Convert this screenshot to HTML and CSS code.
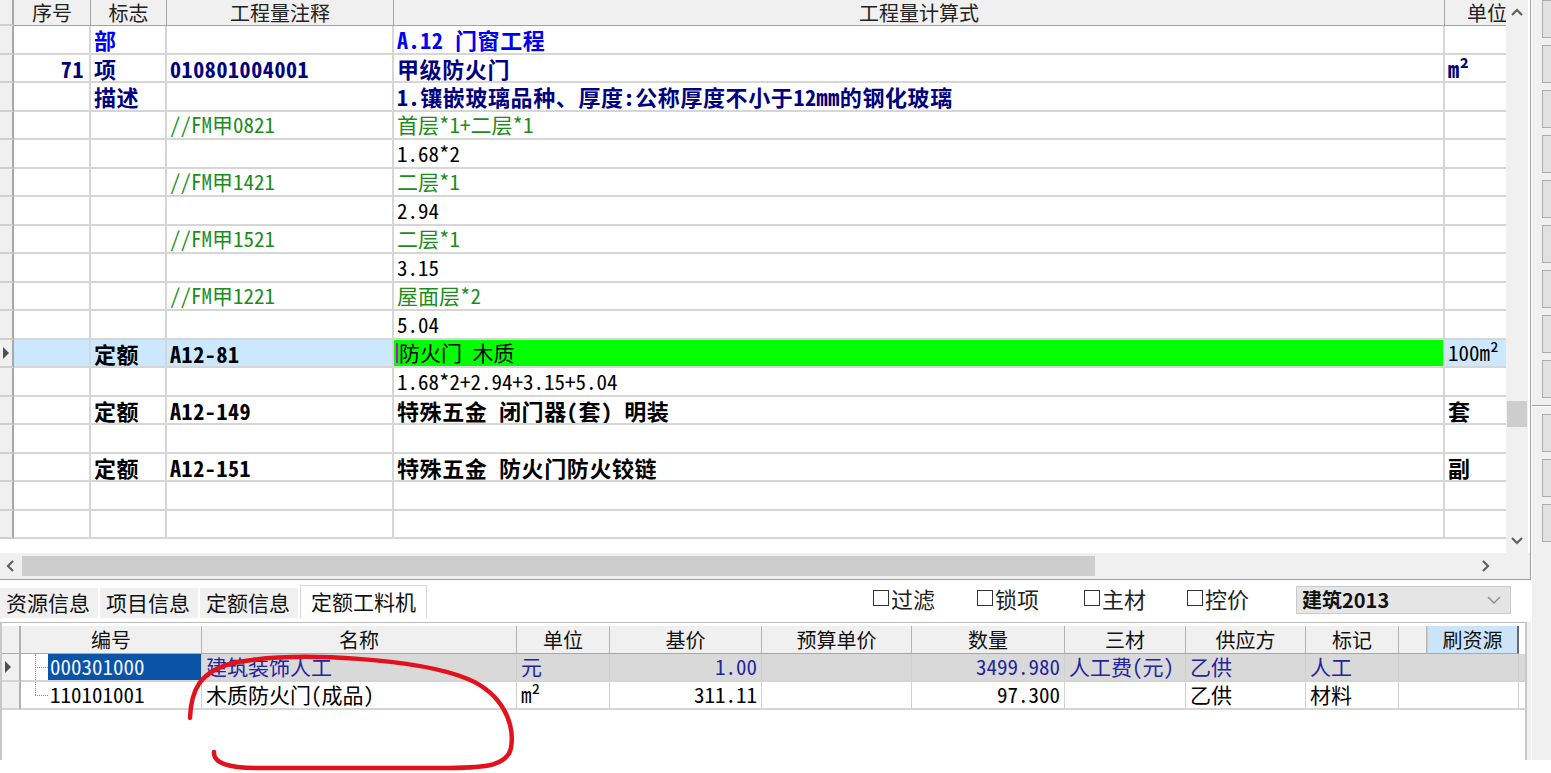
FILE: index.html
```html
<!DOCTYPE html>
<html lang="zh-CN">
<head>
<meta charset="utf-8">
<title>工程量计算</title>
<link rel="stylesheet" href="styles.css">
</head>
<body>
<div class="app">
  <div class="left">
    <div class="top">
      <div class="top-main">
        <div class="grid">
          <div class="row head">
            <div class="rh"></div><div>序号</div><div>标志</div><div>工程量注释</div><div>工程量计算式</div><div>单位</div>
          </div>
          <div class="row b blue">
            <div class="rh"></div><div class="num"></div><div>部</div><div></div><div>A.12 门窗工程</div><div></div>
          </div>
          <div class="row b navy">
            <div class="rh"></div><div class="num">71</div><div>项</div><div>010801004001</div><div>甲级防火门</div><div>m²</div>
          </div>
          <div class="row b navy">
            <div class="rh"></div><div class="num"></div><div>描述</div><div></div><div>1.镶嵌玻璃品种、厚度:公称厚度不小于12mm的钢化玻璃</div><div></div>
          </div>
          <div class="row green">
            <div class="rh"></div><div class="num"></div><div></div><div>//FM甲0821</div><div>首层*1+二层*1</div><div></div>
          </div>
          <div class="row">
            <div class="rh"></div><div class="num"></div><div></div><div></div><div>1.68*2</div><div></div>
          </div>
          <div class="row green">
            <div class="rh"></div><div class="num"></div><div></div><div>//FM甲1421</div><div>二层*1</div><div></div>
          </div>
          <div class="row">
            <div class="rh"></div><div class="num"></div><div></div><div></div><div>2.94</div><div></div>
          </div>
          <div class="row green">
            <div class="rh"></div><div class="num"></div><div></div><div>//FM甲1521</div><div>二层*1</div><div></div>
          </div>
          <div class="row">
            <div class="rh"></div><div class="num"></div><div></div><div></div><div>3.15</div><div></div>
          </div>
          <div class="row green">
            <div class="rh"></div><div class="num"></div><div></div><div>//FM甲1221</div><div>屋面层*2</div><div></div>
          </div>
          <div class="row">
            <div class="rh"></div><div class="num"></div><div></div><div></div><div>5.04</div><div></div>
          </div>
          <div class="row sel">
            <div class="rh"><svg width="8" height="12" viewBox="0 0 8 12"><polygon points="1,0 7,6 1,12" fill="#505050"/></svg></div>
            <div class="num"></div><div class="bold">定额</div><div class="bold">A12-81</div><div class="hl"><span class="caret"></span>防火门 木质</div><div>100m²</div>
          </div>
          <div class="row">
            <div class="rh"></div><div class="num"></div><div></div><div></div><div>1.68*2+2.94+3.15+5.04</div><div></div>
          </div>
          <div class="row b">
            <div class="rh"></div><div class="num"></div><div>定额</div><div>A12-149</div><div>特殊五金 闭门器(套) 明装</div><div>套</div>
          </div>
          <div class="row">
            <div class="rh"></div><div class="num"></div><div></div><div></div><div></div><div></div>
          </div>
          <div class="row b">
            <div class="rh"></div><div class="num"></div><div>定额</div><div>A12-151</div><div>特殊五金 防火门防火铰链</div><div>副</div>
          </div>
          <div class="row">
            <div class="rh"></div><div class="num"></div><div></div><div></div><div></div><div></div>
          </div>
          <div class="row">
            <div class="rh"></div><div class="num"></div><div></div><div></div><div></div><div></div>
          </div>
        </div>
        <div class="vscroll">
          <div class="arrow"><svg width="22" height="24" viewBox="0 0 22 24"><polyline points="6,15 11,10 16,15" fill="none" stroke="#606060" stroke-width="2.2"/></svg></div>
          <div class="vtrack"><div class="vthumb"></div></div>
          <div class="arrow"><svg width="22" height="26" viewBox="0 0 22 26"><polyline points="6,11 11,16 16,11" fill="none" stroke="#606060" stroke-width="2.2"/></svg></div>
        </div>
      </div>
      <div class="hscroll">
        <div class="harrow"><svg width="20" height="26" viewBox="0 0 20 26"><polyline points="13,8 8,13 13,18" fill="none" stroke="#606060" stroke-width="2.2"/></svg></div>
        <div class="hthumb"></div>
        <div class="hspace"></div>
        <div class="harrow"><svg width="20" height="26" viewBox="0 0 20 26"><polyline points="7,8 12,13 7,18" fill="none" stroke="#606060" stroke-width="2.2"/></svg></div>
        <div class="corner"></div>
      </div>
    </div>

    <div class="bottom">
      <div class="tabbar">
        <div class="tabs">
          <div class="tab">资源信息</div>
          <div class="tab">项目信息</div>
          <div class="tab">定额信息</div>
          <div class="tab active">定额工料机</div>
        </div>
        <div class="controls">
          <label class="chk"><span class="box"></span>过滤</label>
          <label class="chk"><span class="box"></span>锁项</label>
          <label class="chk"><span class="box"></span>主材</label>
          <label class="chk"><span class="box"></span>控价</label>
          <div class="dropdown"><span>建筑2013</span><svg width="16" height="10" viewBox="0 0 16 10"><polyline points="2,2 8,8 14,2" fill="none" stroke="#8a8a8a" stroke-width="1.4"/></svg></div>
        </div>
      </div>
      <div class="bwrap">
        <div class="bgrid">
          <div class="brow bhead">
            <div class="rh"></div><div>编号</div><div>名称</div><div>单位</div><div>基价</div><div>预算单价</div><div>数量</div><div>三材</div><div>供应方</div><div>标记</div><div></div><div class="brush">刷资源</div><div class="endc"></div>
          </div>
          <div class="brow bsel">
            <div class="rh"><svg width="8" height="12" viewBox="0 0 8 12"><polygon points="1,0 7,6 1,12" fill="#505050"/></svg></div>
            <div class="codecell"><span class="tree full"></span><span class="code">000301000</span></div>
            <div>建筑装饰人工</div><div>元</div><div class="r">1.00</div><div></div><div class="r">3499.980</div><div>人工费(元)</div><div>乙供</div><div>人工</div><div class="span2"></div><div class="endc"></div>
          </div>
          <div class="brow">
            <div class="rh"></div>
            <div class="codecell"><span class="tree half"></span><span class="code">110101001</span></div>
            <div>木质防火门(成品)</div><div>m²</div><div class="r">311.11</div><div></div><div class="r">97.300</div><div></div><div>乙供</div><div>材料</div><div class="span2"></div><div class="endc"></div>
          </div>
        </div>
        <div class="bfill"></div>
      </div>
    </div>
  </div>

  <div class="side">
    <div class="sbtn"></div><div class="sbtn"></div><div class="sbtn"></div>
    <div class="sbtn"></div><div class="sbtn"></div><div class="sbtn"></div>
    <div class="sbtn"></div><div class="sbtn"></div><div class="sbtn"></div>
    <div class="ssep"></div>
    <div class="sbtn"></div><div class="sbtn"></div><div class="sbtn"></div>
  </div>

  <svg class="mark" width="1551" height="773" viewBox="0 0 1551 773">
    <path d="M190,718 C191,692 198,670 238,662 C300,651 420,659 468,679 C503,694 515,724 511,748 C507,768 478,768 440,768 L258,768 C228,768 213,763 214,752" fill="none" stroke="#e3111b" stroke-width="4.5" stroke-linecap="round" stroke-linejoin="round"/>
  </svg>
</div>
</body>
</html>
```

FILE: styles.css
```css
* { box-sizing: border-box; margin: 0; padding: 0; }
html, body { background: #fff; }
body {
  margin: 0;
  width: 1551px;
  height: 773px;
  overflow: hidden;
  font-family: "Noto Sans Mono CJK SC", "Noto Sans CJK SC", sans-serif;
  color: #000;
  line-height: 1.2;
}
.app { position: relative; display: flex; width: 1551px; height: 760px; }
.left { width: 1531px; display: flex; flex-direction: column; }

/* ---------- top panel ---------- */
.top {
  height: 580px;
  border-right: 1px solid #a0a0a0;
  border-bottom: 1px solid #a0a0a0;
  display: flex;
  flex-direction: column;
}
.top-main { display: flex; height: 553px; }
.grid { width: 1506px; height: 553px; overflow: hidden; background: #fff; }
.row {
  display: grid;
  grid-template-columns: 14px 77px 76px 227px 1051px 90px;
  height: 28.5px;
  font-size: 21px;
}
.row > div {
  border-right: 2px solid #d6d6d6;
  border-bottom: 2px solid #d6d6d6;
  display: flex;
  align-items: center;
  padding-left: 3px;
  white-space: nowrap;
  overflow: hidden;
}
.row > .rh {
  background: #f0f0f0;
  border-right: 2px solid #a8a8a8;
  border-bottom: 2px solid #cfcfcf;
  padding: 0 0 0 2px;
}
.row > .num { justify-content: flex-end; padding: 0 5px 0 0; }
.head { height: 26px; background: #f0f0f0; }
.head > div {
  justify-content: center;
  padding: 0;
  border-right: 1px solid #a4a4a4;
  border-bottom: 1px solid #a4a4a4;
  font-size: 20px;
  color: #222;
}
.head > div:last-child { justify-content: flex-start; padding-left: 22px; }
.b { font-weight: 700; font-size: 22px; letter-spacing: 0.6px; }
.bold { font-weight: 700; font-size: 22px; letter-spacing: 0.6px; }
.blue { color: #0000f0; }
.navy { color: #000080; }
.green { color: #1c8c1c; }
.sel > div { background: #cce8ff; }
.sel > .rh { background: #f0f0f0; }
.sel > .hl { background: #00ff00; padding-left: 2px; }
.caret { width: 2px; height: 20px; background: #d000d0; margin-right: 1px; }

.vscroll { width: 22px; background: #f0f0f0; display: flex; flex-direction: column; }
.vscroll .arrow { height: 24px; }
.vscroll .arrow:last-child { height: 26px; }
.vtrack { flex: 1; }
.vthumb { margin-top: 377px; height: 26px; background: #cdcdcd; margin-left: 1px; width: 20px; }

.hscroll { height: 26px; background: #f0f0f0; display: flex; align-items: center; }
.harrow { width: 20px; height: 26px; }
.hthumb { margin-left: 2px; width: 1073px; height: 20px; background: #cdcdcd; }
.hspace { flex: 1; }
.corner { width: 34px; height: 26px; }

/* ---------- side panel ---------- */
.side {
  flex: 1;
  background: #f0f0f0;
  display: flex;
  flex-direction: column;
  gap: 7px;
  padding-left: 10px;
  border-left: 1px solid #fff;
}
.sbtn {
  height: 38px;
  background: #e1e1e1;
  border: 1px solid #adadad;
  border-right: none;
}
.ssep { height: 2px; margin: 0 0 0 -10px; border-top: 1px solid #a0a0a0; border-bottom: 1px solid #fff; }

/* ---------- bottom panel ---------- */
.bottom { flex: 1; display: flex; flex-direction: column; }
.tabbar { height: 42px; display: flex; align-items: flex-start; }
.tabs { display: flex; align-items: flex-end; height: 38px; gap: 2px; }
.tab {
  height: 30px;
  background: #f0f0f0;
  font-size: 21px;
  color: #111;
  padding: 0 8px 0 6px;
  display: flex;
  align-items: center;
  font-family: "Noto Sans CJK SC", sans-serif;
}
.tab.active {
  height: 33px;
  background: #fff;
  border: 1px solid #d9d9d9;
  border-bottom: none;
  padding: 0 10px;
}
.controls {
  margin-left: 446px;
  margin-top: 3px;
  display: grid;
  grid-template-columns: 104px 107px 103px 109px 215px;
  align-items: center;
  height: 28px;
}
.chk {
  display: flex;
  align-items: center;
  font-size: 22px;
  color: #222;
  font-family: "Noto Sans CJK SC", sans-serif;
}
.chk .box { width: 16px; height: 16px; border: 1px solid #333; background: #fff; margin-right: 2px; }
.dropdown {
  height: 28px;
  margin-top: 3px;
  background: #e5e5e5;
  border: 1px solid #cacaca;
  display: flex;
  align-items: center;
  justify-content: space-between;
  padding: 0 8px 0 5px;
  font-family: "Noto Sans CJK SC", sans-serif;
  font-weight: 700;
  font-size: 20px;
  color: #111;
}

.bwrap { flex: 1; display: flex; }
.bgrid {
  width: 1525px;
  border-top: 1px solid #bcbcbc;
  border-left: 2px solid #c8c8c8;
  padding-top: 3px;
  font-size: 21px;
}
.bfill { flex: 1; background: #f0f0f0; border-left: 2px solid #c8c8c8; }
.brow {
  display: grid;
  grid-template-columns: 19px 181px 315px 93px 152px 150px 153px 121px 120px 93px 28px 92px 6px;
  height: 28px;
}
.brow > div {
  border-right: 1px solid #d0d0d0;
  border-bottom: 2px solid #d4d4d4;
  display: flex;
  align-items: center;
  padding-left: 4px;
  white-space: nowrap;
  overflow: hidden;
}
.brow > .rh { background: #f0f0f0; border-right: 2px solid #b0b0b0; padding-left: 2px; }
.brow > .r { justify-content: flex-end; padding: 0 4px 0 0; }
.brow > .span2 { grid-column: span 2; }
.brow > .endc { border-right: none; }
.bhead > div {
  background: #f0f0f0;
  justify-content: center;
  padding: 0;
  border-right: 1px solid #b4b4b4;
  border-bottom: 1px solid #a8a8a8;
  font-family: "Noto Sans CJK SC", sans-serif;
  font-size: 20px;
  color: #111;
}
.bhead > .brush { background: #cce4f7; border-left: 1px solid #b8cfe3; border-right: 2px solid #6a6a6a; }
.bhead > .endc { background: #fff; border-bottom: none; }
.bsel > div { background: #d9d9d9; color: #2424a0; }
.bsel > .rh { background: #f0f0f0; }
.brow > .codecell { padding: 0; background: #fff; border-right: 1px solid #d0d0d0; }
.codecell .tree { position: relative; width: 27px; height: 100%; flex: none; }
.codecell .tree::before {
  content: "";
  position: absolute;
  left: 14px;
  top: 0;
  height: 100%;
  border-left: 1px dotted #8a8a8a;
}
.codecell .tree.half::before { height: 50%; }
.codecell .tree::after {
  content: "";
  position: absolute;
  left: 14px;
  top: 50%;
  width: 13px;
  border-top: 1px dotted #8a8a8a;
}
.codecell .code { flex: 1; height: 100%; display: flex; align-items: center; padding-left: 2px; }
.bsel .codecell .code { background: #0a54a8; color: #f4f4ff; }

.mark { position: absolute; left: 0; top: 0; pointer-events: none; }
```
